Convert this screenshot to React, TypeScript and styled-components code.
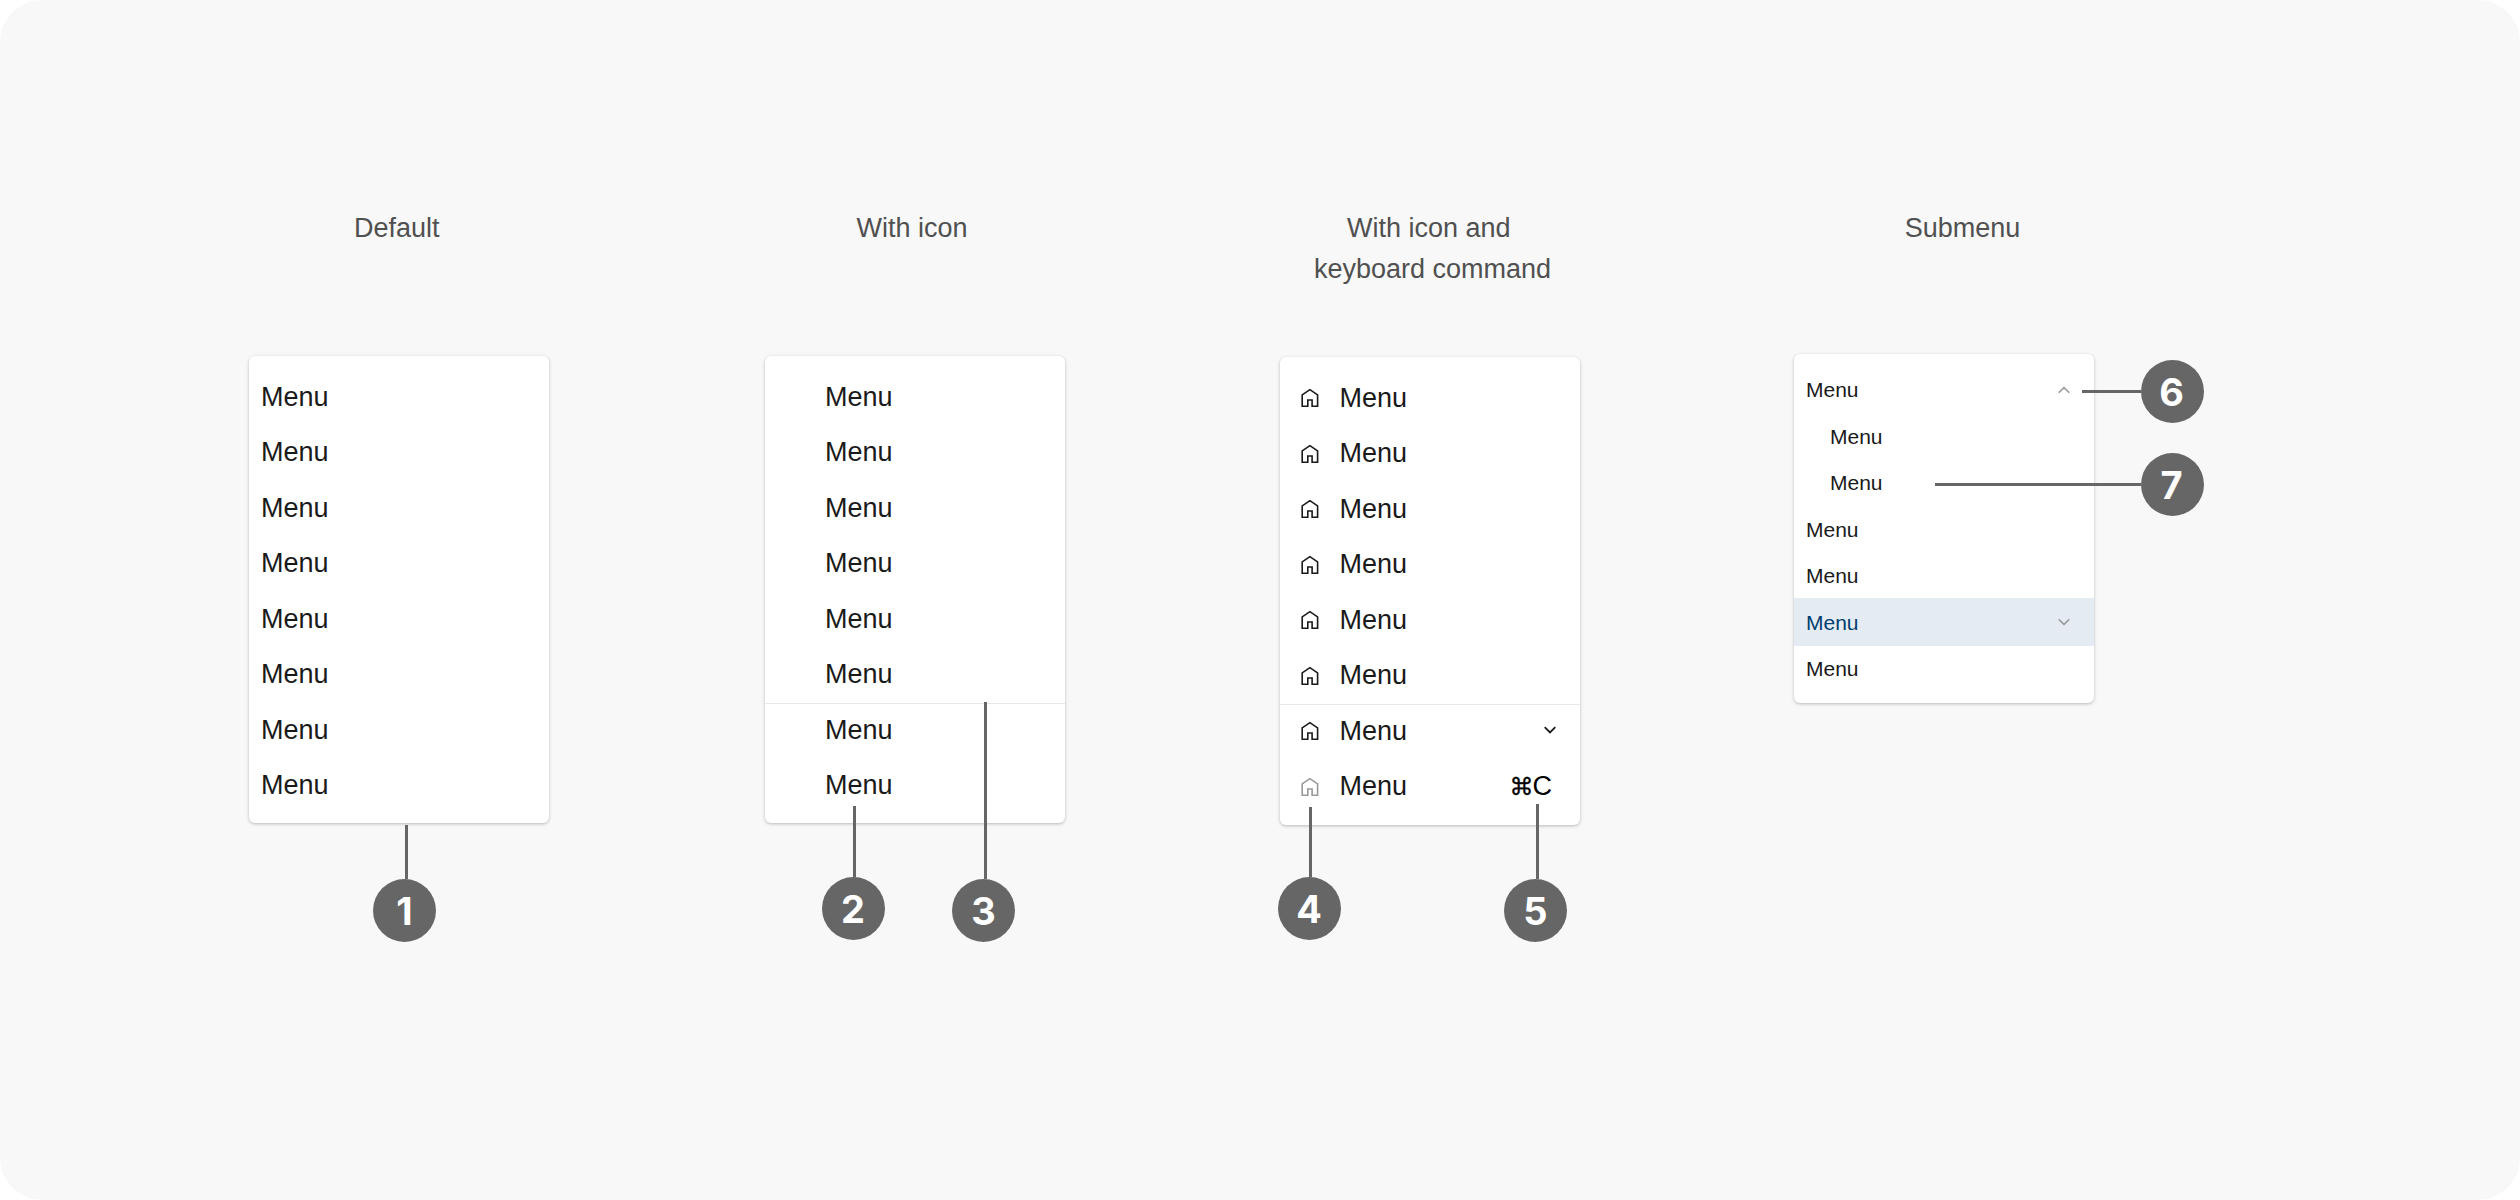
import React from "react";
import styled, { createGlobalStyle } from "styled-components";

const GlobalStyle = createGlobalStyle`
  *, *::before, *::after { box-sizing: border-box; }
  body { margin: 0; background: #ffffff; }
`;

const Stage = styled.main`
  width: 2520px;
  height: 1200px;
  padding: 208px 426px 0 249px;
  border-radius: 42px;
  background: #f8f8f8;
  font-family: "Liberation Sans", Arial, sans-serif;
  font-size: 27px;
`;

const Columns = styled.div`
  display: grid;
  grid-template-columns: 516px 515px 514px 300px;
  align-items: start;
`;

const Column = styled.section`
  width: 300px;
  display: flex;
  flex-direction: column;
`;

const Title = styled.h2<{ $shift: number; $gap: number }>`
  height: ${(p) => 146 + p.$gap}px;
  margin: 0 -30px;
  padding-left: ${(p) => Math.max(p.$shift, 0) * 2}px;
  padding-right: ${(p) => Math.max(-p.$shift, 0) * 2}px;
  color: #505050;
  font-size: 27px;
  font-weight: 400;
  line-height: 40.5px;
  text-align: center;
  white-space: pre;
`;

const Card = styled.div<{ $height: number; $compact?: boolean }>`
  position: relative;
  width: 300px;
  height: ${(p) => p.$height}px;
  padding-top: ${(p) => (p.$compact ? 12.6 : 13.5)}px;
  border-radius: 6px;
  background: #ffffff;
  box-shadow: 0 1px 3px rgba(0, 0, 0, 0.22), 0 1px 6px rgba(0, 0, 0, 0.05);
`;

const List = styled.ul`
  margin: 0;
  padding: 0;
  list-style: none;
`;

const Item = styled.li<{ $indent: number; $compact?: boolean; $selected?: boolean; $divided?: boolean }>`
  display: flex;
  align-items: center;
  height: ${(p) => (p.$selected ? 48 : p.$compact ? 46.5 : 55.5)}px;
  margin: ${(p) => (p.$selected ? "-0.9px 0 -0.6px" : "0")};
  padding-left: ${(p) => p.$indent}px;
  color: ${(p) => (p.$selected ? "#00406f" : "#1a1a1a")};
  background: ${(p) => (p.$selected ? "#e5ebf2" : "transparent")};
  box-shadow: ${(p) => (p.$divided ? "inset 0 1px 0 #e8e8e8" : "none")};
  font-size: ${(p) => (p.$compact ? 21 : 27)}px;
  line-height: 1;
`;

const Label = styled.span`
  flex: 1;
`;

const Shortcut = styled.kbd`
  display: flex;
  align-items: center;
  margin-right: 28px;
  color: #000000;
  font-family: "Liberation Sans", sans-serif;
  font-size: 27px;
`;

const CommandKey = styled.span`
  font-family: "DejaVu Sans", sans-serif;
  font-size: 24px;
  letter-spacing: -1px;
  -webkit-text-stroke: 0.4px #1a1a1a;
`;

const HomeSvg = styled.svg<{ $muted?: boolean }>`
  width: 24px;
  height: 24px;
  margin-right: 18px;
  color: ${(p) => (p.$muted ? "#999999" : "#1a1a1a")};
`;

const ChevronSvg = styled.svg<{ $muted?: boolean; $up?: boolean }>`
  width: 16px;
  height: 12px;
  margin-right: 22.5px;
  margin-bottom: ${(p) => (p.$muted ? 0 : 2)}px;
  color: ${(p) => (p.$muted ? "#999999" : "#1a1a1a")};
  transform: ${(p) => (p.$up ? "scaleY(-1)" : "none")};
`;

const Callout = styled.div<{ $x: number; $y: number; $side?: boolean }>`
  position: absolute;
  left: ${(p) => p.$x}px;
  top: ${(p) => p.$y}px;
  display: flex;
  flex-direction: ${(p) => (p.$side ? "row" : "column")};
  align-items: ${(p) => (p.$side ? "center" : "flex-start")};
`;

const Leader = styled.span<{ $length: number; $side?: boolean; $offset?: number }>`
  width: ${(p) => (p.$side ? p.$length : 3)}px;
  height: ${(p) => (p.$side ? 3 : p.$length)}px;
  margin-left: ${(p) => p.$offset ?? 0}px;
  background: #666666;
`;

const Badge = styled.span`
  display: flex;
  align-items: center;
  justify-content: center;
  width: 63px;
  height: 63px;
  padding-right: 1px;
  border-radius: 50%;
  background: #666666;
  color: #ffffff;
  font-family: Inter, sans-serif;
  font-size: 38px;
  font-weight: 700;
  line-height: 1;
`;

function HomeIcon({ muted }: { muted?: boolean }) {
  return (
    <HomeSvg $muted={muted} viewBox="0 0 24 24" fill="none" stroke="currentColor" strokeWidth="1.6">
      <path d="M4.2 20.2V8.900L11.900 3.600L19.600 8.900V20.200H14.100V14H9.800V20.200Z" />
    </HomeSvg>
  );
}

function Chevron({ muted, up }: { muted?: boolean; up?: boolean }) {
  return (
    <ChevronSvg $muted={muted} $up={up} viewBox="0 0 16 12" fill="none" stroke="currentColor" strokeWidth={muted ? 1.6 : 1.8}>
      <path d="M2.700 3.200L8 8.400L13.300 3.200" />
    </ChevronSvg>
  );
}

type Entry = {
  indent?: number;
  icon?: "home" | "muted";
  chevron?: "up" | "down";
  shortcut?: string;
  selected?: boolean;
  divided?: boolean;
};
type Note = { n: number; x: number; y: number; length: number; side?: boolean; offset?: number };
type Example = {
  title: string;
  shift: number;
  gap: number;
  height: number;
  indent: number;
  compact?: boolean;
  entries: Entry[];
  notes: Note[];
};

const plain = (count: number): Entry[] => Array.from({ length: count }, () => ({}));

const examples: Example[] = [
  {
    title: "Default",
    shift: -2.2,
    gap: 2,
    height: 467,
    indent: 12,
    entries: plain(8),
    notes: [{ n: 1, x: 124.4, y: 469, length: 54, offset: 31.6 }],
  },
  {
    title: "With icon",
    shift: -3,
    gap: 2,
    height: 467,
    indent: 60,
    entries: [...plain(6), { divided: true }, {}],
    notes: [
      { n: 2, x: 57, y: 450, length: 71, offset: 31.3 },
      { n: 3, x: 187.4, y: 346, length: 177, offset: 31.6 },
    ],
  },
  {
    title: "With icon and \nkeyboard command",
    shift: 2.5,
    gap: 3,
    height: 468,
    indent: 17.5,
    entries: [
      ...Array.from({ length: 6 }, (): Entry => ({ icon: "home" })),
      { icon: "home", chevron: "down", divided: true },
      { icon: "muted", shortcut: "C" },
    ],
    notes: [
      { n: 4, x: -2, y: 450, length: 70, offset: 31.3 },
      { n: 5, x: 224.4, y: 447, length: 75, offset: 31.6 },
    ],
  },
  {
    title: "Submenu",
    shift: 18.5,
    gap: 0,
    height: 349,
    indent: 12,
    compact: true,
    entries: [{ chevron: "up" }, { indent: 36 }, { indent: 36 }, {}, {}, { chevron: "down", selected: true }, {}],
    notes: [
      { n: 6, x: 288, y: 6, length: 58.6, side: true },
      { n: 7, x: 141, y: 99, length: 205.6, side: true },
    ],
  },
];

export default function App() {
  return (
    <>
      <GlobalStyle />
      <Stage>
        <Columns>
          {examples.map((ex) => (
            <Column key={ex.title}>
              <Title $shift={ex.shift} $gap={ex.gap}>{ex.title}</Title>
              <Card $height={ex.height} $compact={ex.compact}>
                <List>
                  {ex.entries.map((e, i) => (
                    <Item
                      key={i}
                      $indent={e.indent ?? ex.indent}
                      $compact={ex.compact}
                      $selected={e.selected}
                      $divided={e.divided}
                    >
                      {e.icon && <HomeIcon muted={e.icon === "muted"} />}
                      <Label>Menu</Label>
                      {e.chevron && <Chevron up={e.chevron === "up"} muted={ex.compact} />}
                      {e.shortcut && (
                        <Shortcut>
                          <CommandKey>⌘</CommandKey>
                          {e.shortcut}
                        </Shortcut>
                      )}
                    </Item>
                  ))}
                </List>
                {ex.notes.map((note) => (
                  <Callout key={note.n} $x={note.x} $y={note.y} $side={note.side}>
                    <Leader $length={note.length} $side={note.side} $offset={note.offset} />
                    <Badge>{note.n}</Badge>
                  </Callout>
                ))}
              </Card>
            </Column>
          ))}
        </Columns>
      </Stage>
    </>
  );
}
